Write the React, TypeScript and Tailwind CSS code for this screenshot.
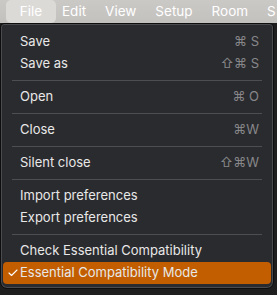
import { Check } from "lucide-react";

type Item =
  | { kind: "item"; label: string; shortcut?: string; checked?: boolean; active?: boolean }
  | { kind: "sep" };

const items: Item[] = [
  { kind: "item", label: "Save", shortcut: "⌘ S" },
  { kind: "item", label: "Save as", shortcut: "⇧⌘ S" },
  { kind: "sep" },
  { kind: "item", label: "Open", shortcut: "⌘ O" },
  { kind: "sep" },
  { kind: "item", label: "Close", shortcut: "⌘W" },
  { kind: "sep" },
  { kind: "item", label: "Silent close", shortcut: "⇧⌘W" },
  { kind: "sep" },
  { kind: "item", label: "Import preferences" },
  { kind: "item", label: "Export preferences" },
  { kind: "sep" },
  { kind: "item", label: "Check Essential Compatibility" },
  { kind: "item", label: "Essential Compatibility Mode", checked: true, active: true },
];

const menus = ["Edit", "View", "Setup", "Room"];

export default function App() {
  return (
    <div
      className="w-[277px] h-[295px] overflow-hidden bg-[#1e1e1f] text-[13px]"
      style={{ fontFamily: "Inter, 'Noto Sans', sans-serif" }}
    >
      {/* menu bar */}
      <div className="h-[23px] bg-gradient-to-b from-[#cbc9c6] to-[#c3c1be] flex items-center text-white text-[13.5px] whitespace-nowrap overflow-hidden">
        <div className="shrink-0 ml-[6px] h-[23px] w-[50px] rounded-[5px] bg-[#dcdad7] flex items-center justify-center">
          File
        </div>
        <div className="flex shrink-0 gap-[19px] ml-[6px]">
          {menus.map((m) => (
            <span key={m}>{m}</span>
          ))}
          <span className="w-[9px] overflow-hidden">S</span>
        </div>
      </div>

      {/* dropdown */}
      <div className="w-[274px] rounded-b-[7px] rounded-t-[4px] border border-[#0e0e0e] bg-[#2a2b2e] shadow-[inset_0_0_0_1px_#4a4b4e] pt-[7px] pb-[4px] px-[2px]">
        {items.map((it, i) =>
          it.kind === "sep" ? (
            <div key={i} className="h-[11px] flex items-center px-[9px]">
              <div className="h-px w-full bg-[#4d4e51]" />
            </div>
          ) : (
            <div
              key={i}
              className={`h-[22px] flex items-center rounded-[4px] pr-[12px] ${
                it.active ? "bg-[#c35e00]" : ""
              }`}
            >
              <span className="w-[17px] flex justify-center">
                {it.checked && <Check size={12} strokeWidth={2.2} className="text-white ml-[2px]" />}
              </span>
              <span className="flex-1 text-[#e8e8e8]">{it.label}</span>
              {it.shortcut && <span className="text-[#87878a]">{it.shortcut}</span>}
            </div>
          )
        )}
      </div>
    </div>
  );
}
